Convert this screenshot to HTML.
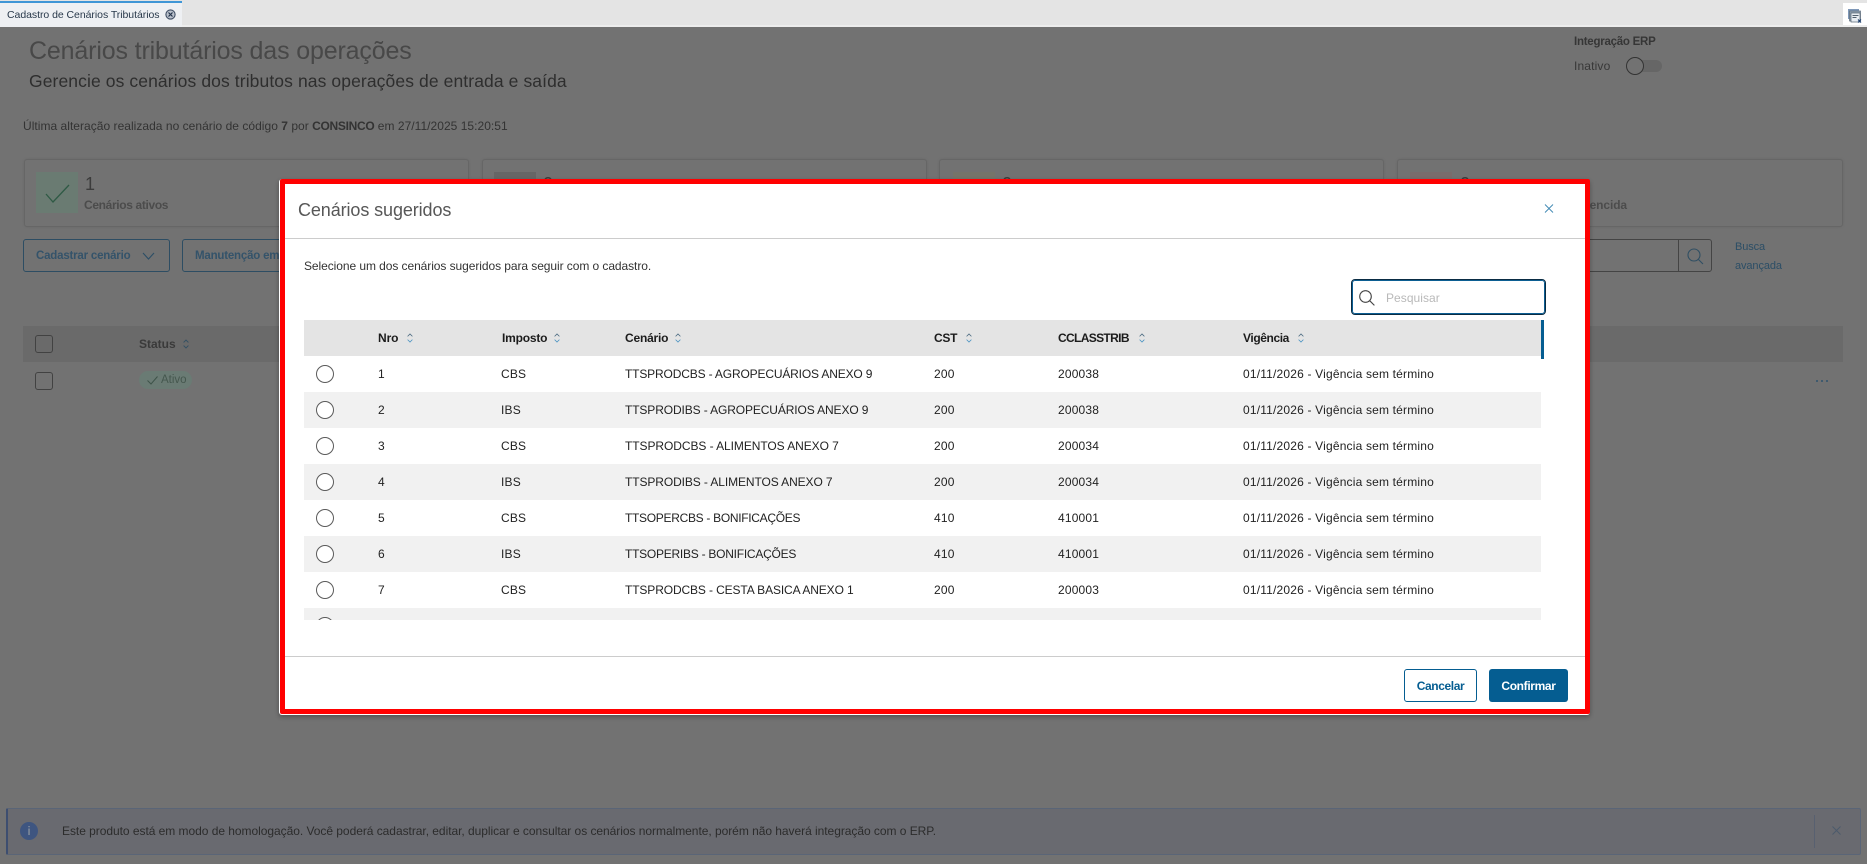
<!DOCTYPE html>
<html lang="pt-BR"><head><meta charset="utf-8"><title>Cadastro de Cenários Tributários</title>
<style>
*{box-sizing:border-box}
html,body{margin:0;padding:0;width:1867px;height:864px;overflow:hidden;background:#727272;font-family:"Liberation Sans",sans-serif}
.a{position:absolute}
.t{position:absolute;white-space:nowrap;line-height:16px}
svg{display:block;position:absolute;overflow:visible}
.card{position:absolute;top:159px;height:68px;border:1px solid #666;border-radius:3px;box-shadow:0 0 2px #6a6a6a}
.ic{position:absolute;top:172px;width:42px;height:41px}
.btn{position:absolute;top:239px;height:33px;border:1px solid #2d4d63;border-radius:3px}
.chk{position:absolute;left:35px;width:18px;height:18px;border:1px solid #424242;border-radius:3px}
.row{position:absolute;left:0;width:1237px;height:36px}
.row.alt{background:#f1f1f1}
.radio{position:absolute;left:12px;top:9px;width:18px;height:18px;border:1.5px solid #5a5a5a;border-radius:50%;background:#fff}
.c{position:absolute;top:10px;font-size:12px;line-height:16px;color:#222;white-space:nowrap;letter-spacing:.18px}
.h{font-weight:700;color:#1c1c1c;font-size:12px;letter-spacing:-.2px}
.sort{width:6px;height:10px}
</style></head><body>

<!-- tab bar -->
<div class="a" style="left:0;top:0;width:1867px;height:27px;background:#e4e4e4;border-bottom:2px solid #ededed"></div>
<div class="a" style="left:0;top:1px;width:182px;height:26px;background:#eef0f3;border-top:2px solid #3f96d6"></div>
<div class="t" style="left:7px;top:7px;font-size:10.5px;color:#28384a;letter-spacing:-.05px">Cadastro de Cenários Tributários</div>
<svg style="left:165px;top:9px" width="11" height="11" viewBox="0 0 11 11"><circle cx="5.5" cy="5.5" r="4.6" fill="#b9c0cb" stroke="#3f4d63" stroke-width="1.1"/><path d="M3.5 3.5l4 4M7.5 3.5l-4 4" stroke="#24334a" stroke-width="1.2"/></svg>
<div class="a" style="left:1843px;top:3px;width:24px;height:22px;background:#fff"></div>
<svg style="left:1848px;top:9px" width="14" height="14" viewBox="0 0 14 14"><rect x="0" y="0" width="11" height="10" fill="#7f98b8"/><rect x="1.5" y="2" width="11" height="10" fill="#8fa0b0" stroke="#5d6c7c" stroke-width=".7"/><rect x="3" y="4" width="9" height="9" fill="#e8edf2" stroke="#52606e" stroke-width=".7"/><path d="M4.5 6.5h6M4.5 8.5h4" stroke="#52606e"/><path d="M10 10.5l3 3M13 10.5l-3 3" stroke="#1d3f6e" stroke-width="1.2"/></svg>

<!-- background page -->
<div class="t" style="left:29px;top:34px;font-size:25px;line-height:34px;color:#484848;letter-spacing:-.15px">Cenários tributários das operações</div>
<div class="t" style="left:29px;top:70px;font-size:17.5px;line-height:22px;color:#2e2e2e;letter-spacing:.1px">Gerencie os cenários dos tributos nas operações de entrada e saída</div>
<div class="t" style="left:23px;top:118px;font-size:12px;color:#333;letter-spacing:.03px">Última alteração realizada no cenário de código <b>7</b> por <b style="letter-spacing:-.3px">CONSINCO</b> em 27/11/2025 15:20:51</div>
<div class="t" style="left:1574px;top:34px;font-size:11.5px;font-weight:700;color:#363636;letter-spacing:-.25px">Integração ERP</div>
<div class="t" style="left:1574px;top:58px;font-size:12px;color:#383838;letter-spacing:.15px">Inativo</div>
<div class="a" style="left:1632px;top:60px;width:30px;height:12px;background:#666;border-radius:6px"></div>
<div class="a" style="left:1626px;top:57px;width:18px;height:18px;background:#727272;border:1px solid #333;border-radius:50%"></div>

<div class="card" style="left:24px;width:445px"></div>
<div class="card" style="left:482px;width:445px"></div>
<div class="card" style="left:939px;width:445px"></div>
<div class="card" style="left:1397px;width:446px"></div>
<div class="ic" style="left:36px;background:#6a7b72"></div>
<svg style="left:45px;top:184px" width="25" height="19" viewBox="0 0 25 19"><path d="M1 10l7 8L24 1" fill="none" stroke="#2f5a45" stroke-width="1.3"/></svg>
<div class="ic" style="left:494px;background:#666"></div>
<div class="ic" style="left:953px;background:#75746a"></div>
<div class="ic" style="left:1410px;background:#796c6c"></div>
<div class="t" style="left:85px;top:174px;font-size:18px;line-height:20px;color:#3c3c3c">1</div>
<div class="t" style="left:543px;top:174px;font-size:18px;line-height:20px;color:#3c3c3c">0</div>
<div class="t" style="left:1002px;top:174px;font-size:18px;line-height:20px;color:#3c3c3c">0</div>
<div class="t" style="left:1460px;top:174px;font-size:18px;line-height:20px;color:#3c3c3c">0</div>
<div class="t" style="left:84px;top:197px;font-size:12px;font-weight:700;color:#4c4c4c;letter-spacing:-.35px">Cenários ativos</div>
<div class="t" style="right:240px;top:197px;font-size:12px;font-weight:700;color:#4c4c4c;letter-spacing:-.1px">Cenários com vigência vencida</div>

<div class="btn" style="left:23px;width:147px"></div>
<div class="t" style="left:36px;top:248px;font-size:11.5px;font-weight:700;color:#34536a;letter-spacing:-.2px">Cadastrar cenário</div>
<svg style="left:142px;top:252px" width="13" height="8" viewBox="0 0 13 8"><path d="M1 1l5.500 6L12 1" fill="none" stroke="#2c4e66" stroke-width="1.1"/></svg>
<div class="btn" style="left:182px;width:120px"></div>
<div class="t" style="left:195px;top:248px;font-size:11.5px;font-weight:700;color:#34536a;letter-spacing:-.2px">Manutenção em lote</div>
<div class="btn" style="left:1500px;width:212px;border-color:#444"></div>
<div class="a" style="left:1678px;top:239px;width:1px;height:33px;background:#444"></div>
<svg style="left:1687px;top:248px" width="17" height="17" viewBox="0 0 17 17"><circle cx="7" cy="7" r="6" fill="none" stroke="#304f63" stroke-width="1.1"/><path d="M11.500 11.500l4.500 4.500" stroke="#304f63" stroke-width="1.1"/></svg>
<div class="t" style="left:1735px;top:239px;font-size:11px;color:#2c4e66;letter-spacing:-.1px">Busca</div>
<div class="t" style="left:1735px;top:258px;font-size:11px;color:#2c4e66;letter-spacing:-.1px">avançada</div>

<div class="a" style="left:23px;top:326px;width:1820px;height:36px;background:#6a6a6a"></div>
<div class="chk" style="top:335px"></div>
<div class="chk" style="top:372px"></div>
<div class="t" style="left:139px;top:336px;font-size:12px;font-weight:700;color:#3a3a3a">Status</div>
<svg class="sort" style="left:183px;top:339px" viewBox="0 0 6 10"><path d="M.6 3.400L3 1l2.400 2.400M.6 6.600L3 9l2.400-2.400" fill="none" stroke="#324f63" stroke-width=".9"/></svg>
<div class="a" style="left:139px;top:371px;width:53px;height:18px;background:#6a7b74;border-radius:9px"></div>
<svg style="left:147px;top:376px" width="11" height="9" viewBox="0 0 11 9"><path d="M.5 4.500l3.500 3.500L10.500 .5" fill="none" stroke="#3e5349" stroke-width="1"/></svg>
<div class="t" style="left:161px;top:372px;font-size:11.5px;color:#45574e">Ativo</div>
<div class="a" style="left:1816px;top:380px;width:2px;height:2px;background:#3f5a6e"></div>
<div class="a" style="left:1821px;top:380px;width:2px;height:2px;background:#3f5a6e"></div>
<div class="a" style="left:1826px;top:380px;width:2px;height:2px;background:#3f5a6e"></div>

<!-- alert -->
<div class="a" style="left:6px;top:808px;width:1855px;height:47px;background:#696a70;border:1px solid #5a6577;border-left:2px solid #3d4e70;border-radius:2px"></div>
<div class="a" style="left:20px;top:822px;width:18px;height:18px;border-radius:50%;background:#3e5580"></div>
<div class="t" style="left:20px;top:823px;width:18px;text-align:center;font-size:12px;font-weight:700;color:#7b8698">i</div>
<div class="t" style="left:62px;top:823px;font-size:12px;color:#2c2c2c;letter-spacing:-.04px">Este produto está em modo de homologação. Você poderá cadastrar, editar, duplicar e consultar os cenários normalmente, porém não haverá integração com o ERP.</div>
<div class="a" style="left:1814px;top:815px;width:1px;height:33px;background:#586070"></div>
<svg style="left:1832px;top:826px" width="9" height="9" viewBox="0 0 9 9"><path d="M.5 .5l8 8M8.500 .5l-8 8" stroke="#4c5a6c" stroke-width="1"/></svg>

<!-- modal -->
<div class="a" style="left:279px;top:179px;width:1311px;height:536px;background:#fff;border-radius:3px;box-shadow:0 2px 5px rgba(0,0,0,.3)"></div>
<div class="t" style="left:298px;top:199px;font-size:18px;line-height:22px;color:#575757;letter-spacing:-.1px">Cenários sugeridos</div>
<svg style="left:1544px;top:204px" width="10" height="9" viewBox="0 0 10 9"><path d="M1 .5l8 8M9 .5l-8 8" stroke="#3f88b3" stroke-width=".9"/></svg>
<div class="a" style="left:285px;top:238px;width:1300px;height:1px;background:#ccc"></div>
<div class="t" style="left:304px;top:258px;font-size:12px;color:#333;letter-spacing:-.07px">Selecione um dos cenários sugeridos para seguir com o cadastro.</div>

<div class="a" style="left:1351px;top:279px;width:195px;height:36px;border:1px solid #0a2c44;border-radius:4px"></div>
<div class="a" style="left:1352px;top:280px;width:193px;height:34px;border:1px solid #0c5e92;border-radius:3px"></div>
<svg style="left:1359px;top:290px" width="16" height="16" viewBox="0 0 16 16"><circle cx="6.500" cy="6.500" r="5.800" fill="none" stroke="#444" stroke-width="1.100"/><path d="M10.800 10.800l4.600 4.600" stroke="#444" stroke-width="1.100"/></svg>
<div class="t" style="left:1386px;top:290px;font-size:12px;color:#b9b9b9;letter-spacing:.05px">Pesquisar</div>

<div class="a" style="left:304px;top:320px;width:1237px;height:300px;overflow:hidden;background:#fff">
  <div class="row" style="top:0;background:#e4e4e4">
    <div class="c h" style="left:74px;top:10px;letter-spacing:-.1px">Nro</div>
    <div class="c h" style="left:198px;top:10px;letter-spacing:-.2px">Imposto</div>
    <div class="c h" style="left:321px;top:10px;letter-spacing:-.2px">Cenário</div>
    <div class="c h" style="left:630px;top:10px;letter-spacing:-.3px">CST</div>
    <div class="c h" style="left:754px;top:10px;letter-spacing:-.65px">CCLASSTRIB</div>
    <div class="c h" style="left:939px;top:10px;letter-spacing:-.4px">Vigência</div>
    <svg class="sort" style="left:103px;top:13px" viewBox="0 0 6 10"><path d="M.6 3.400L3 1l2.400 2.400" fill="none" stroke="#4a6a80" stroke-width=".8"/><path d="M.6 6.600L3 9l2.400-2.400" fill="none" stroke="#4a93c2" stroke-width=".8"/></svg>
    <svg class="sort" style="left:250px;top:13px" viewBox="0 0 6 10"><path d="M.6 3.400L3 1l2.400 2.400" fill="none" stroke="#4a6a80" stroke-width=".8"/><path d="M.6 6.600L3 9l2.400-2.400" fill="none" stroke="#4a93c2" stroke-width=".8"/></svg>
    <svg class="sort" style="left:371px;top:13px" viewBox="0 0 6 10"><path d="M.6 3.400L3 1l2.400 2.400" fill="none" stroke="#4a6a80" stroke-width=".8"/><path d="M.6 6.600L3 9l2.400-2.400" fill="none" stroke="#4a93c2" stroke-width=".8"/></svg>
    <svg class="sort" style="left:662px;top:13px" viewBox="0 0 6 10"><path d="M.6 3.400L3 1l2.400 2.400" fill="none" stroke="#4a6a80" stroke-width=".8"/><path d="M.6 6.600L3 9l2.400-2.400" fill="none" stroke="#4a93c2" stroke-width=".8"/></svg>
    <svg class="sort" style="left:835px;top:13px" viewBox="0 0 6 10"><path d="M.6 3.400L3 1l2.400 2.400" fill="none" stroke="#4a6a80" stroke-width=".8"/><path d="M.6 6.600L3 9l2.400-2.400" fill="none" stroke="#4a93c2" stroke-width=".8"/></svg>
    <svg class="sort" style="left:994px;top:13px" viewBox="0 0 6 10"><path d="M.6 3.400L3 1l2.400 2.400" fill="none" stroke="#4a6a80" stroke-width=".8"/><path d="M.6 6.600L3 9l2.400-2.400" fill="none" stroke="#4a93c2" stroke-width=".8"/></svg>
  </div>
  <div class="row" style="top:36px"><div class="radio"></div><div class="c" style="left:74px">1</div><div class="c" style="left:197px">CBS</div><div class="c" style="left:321px;letter-spacing:-.16px">TTSPRODCBS - AGROPECUÁRIOS ANEXO 9</div><div class="c" style="left:630px">200</div><div class="c" style="left:754px">200038</div><div class="c" style="left:939px">01/11/2026 - Vigência sem término</div></div>
  <div class="row alt" style="top:72px"><div class="radio"></div><div class="c" style="left:74px">2</div><div class="c" style="left:197px">IBS</div><div class="c" style="left:321px;letter-spacing:-.12px">TTSPRODIBS - AGROPECUÁRIOS ANEXO 9</div><div class="c" style="left:630px">200</div><div class="c" style="left:754px">200038</div><div class="c" style="left:939px">01/11/2026 - Vigência sem término</div></div>
  <div class="row" style="top:108px"><div class="radio"></div><div class="c" style="left:74px">3</div><div class="c" style="left:197px">CBS</div><div class="c" style="left:321px;letter-spacing:-.07px">TTSPRODCBS - ALIMENTOS ANEXO 7</div><div class="c" style="left:630px">200</div><div class="c" style="left:754px">200034</div><div class="c" style="left:939px">01/11/2026 - Vigência sem término</div></div>
  <div class="row alt" style="top:144px"><div class="radio"></div><div class="c" style="left:74px">4</div><div class="c" style="left:197px">IBS</div><div class="c" style="left:321px;letter-spacing:-.1px">TTSPRODIBS - ALIMENTOS ANEXO 7</div><div class="c" style="left:630px">200</div><div class="c" style="left:754px">200034</div><div class="c" style="left:939px">01/11/2026 - Vigência sem término</div></div>
  <div class="row" style="top:180px"><div class="radio"></div><div class="c" style="left:74px">5</div><div class="c" style="left:197px">CBS</div><div class="c" style="left:321px;letter-spacing:-.3px">TTSOPERCBS - BONIFICAÇÕES</div><div class="c" style="left:630px">410</div><div class="c" style="left:754px">410001</div><div class="c" style="left:939px">01/11/2026 - Vigência sem término</div></div>
  <div class="row alt" style="top:216px"><div class="radio"></div><div class="c" style="left:74px">6</div><div class="c" style="left:197px">IBS</div><div class="c" style="left:321px;letter-spacing:-.25px">TTSOPERIBS - BONIFICAÇÕES</div><div class="c" style="left:630px">410</div><div class="c" style="left:754px">410001</div><div class="c" style="left:939px">01/11/2026 - Vigência sem término</div></div>
  <div class="row" style="top:252px"><div class="radio"></div><div class="c" style="left:74px">7</div><div class="c" style="left:197px">CBS</div><div class="c" style="left:321px;letter-spacing:-.12px">TTSPRODCBS - CESTA BASICA ANEXO 1</div><div class="c" style="left:630px">200</div><div class="c" style="left:754px">200003</div><div class="c" style="left:939px">01/11/2026 - Vigência sem término</div></div>
  <div class="row alt" style="top:288px"><div class="radio"></div></div>
</div>
<div class="a" style="left:1541px;top:320px;width:3px;height:39px;background:#055d91"></div>

<div class="a" style="left:285px;top:656px;width:1300px;height:1px;background:#ccc"></div>
<div class="a" style="left:1404px;top:669px;width:73px;height:33px;border:1px solid #055d91;border-radius:3px;background:#fff"></div>
<div class="t" style="left:1404px;top:678px;width:73px;text-align:center;font-size:12px;font-weight:700;color:#055d91;letter-spacing:-.4px">Cancelar</div>
<div class="a" style="left:1489px;top:669px;width:79px;height:33px;border-radius:3px;background:#055d91"></div>
<div class="t" style="left:1489px;top:678px;width:79px;text-align:center;font-size:12px;font-weight:700;color:#fff;letter-spacing:-.35px">Confirmar</div>

<!-- red highlight frame -->
<div class="a" style="left:280px;top:179px;width:1310px;height:535px;border:5px solid #f00;border-radius:2px"></div>
</body></html>
